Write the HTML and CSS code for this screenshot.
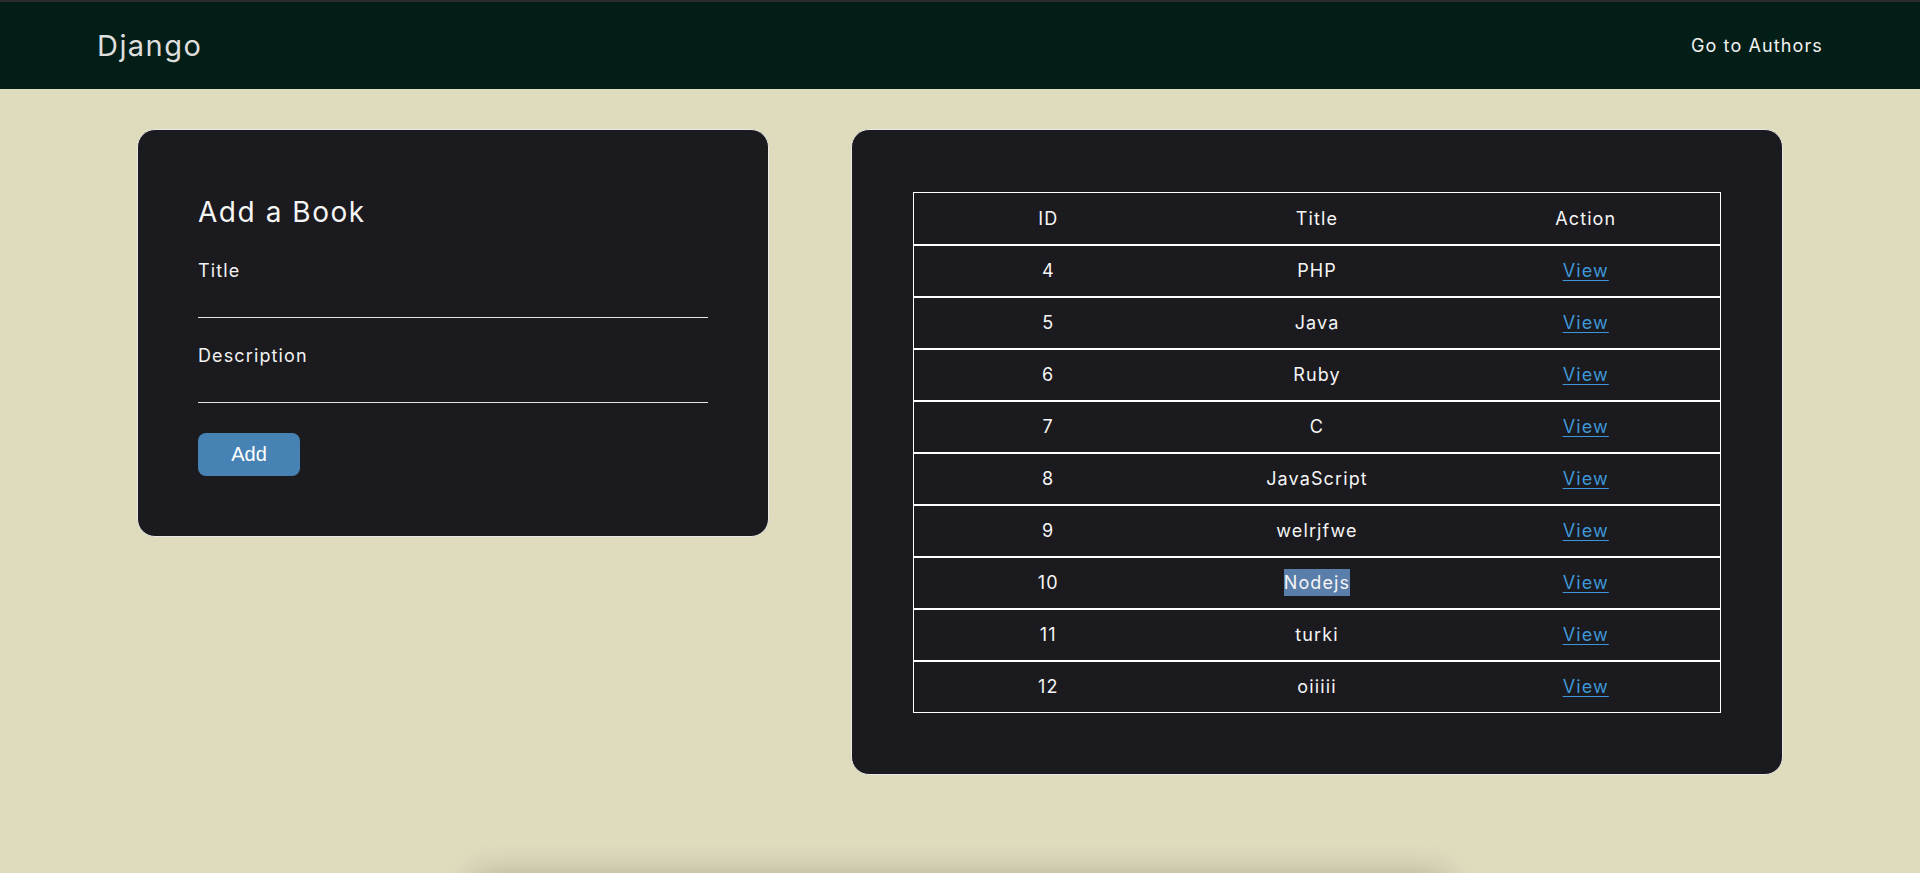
FILE: index.html
```html
<!DOCTYPE html>
<html lang="en">
<head>
<meta charset="utf-8">
<title>Django Books</title>
<link rel="stylesheet" href="styles.css">
</head>
<body>
<header class="topbar">
  <a class="brand" href="#">Django</a>
  <a class="nav-link" href="#">Go to Authors</a>
</header>
<main class="layout">
  <section class="card form-card">
    <h2 class="card-title">Add a Book</h2>
    <form class="book-form">
      <label class="field-label" for="title">Title</label>
      <input class="field-input" id="title" type="text">
      <label class="field-label field-label-gap" for="desc">Description</label>
      <input class="field-input" id="desc" type="text">
      <button class="btn-add" type="button">Add</button>
    </form>
  </section>
  <section class="card table-card">
    <table class="book-table">
      <thead>
        <tr><th>ID</th><th>Title</th><th>Action</th></tr>
      </thead>
      <tbody>
        <tr><td>4</td><td>PHP</td><td><a href="#">View</a></td></tr>
        <tr><td>5</td><td>Java</td><td><a href="#">View</a></td></tr>
        <tr><td>6</td><td>Ruby</td><td><a href="#">View</a></td></tr>
        <tr><td>7</td><td>C</td><td><a href="#">View</a></td></tr>
        <tr><td>8</td><td>JavaScript</td><td><a href="#">View</a></td></tr>
        <tr><td>9</td><td>welrjfwe</td><td><a href="#">View</a></td></tr>
        <tr><td>10</td><td><span class="selected">Nodejs</span></td><td><a href="#">View</a></td></tr>
        <tr><td>11</td><td>turki</td><td><a href="#">View</a></td></tr>
        <tr><td>12</td><td>oiiiii</td><td><a href="#">View</a></td></tr>
      </tbody>
    </table>
  </section>
</main>
<footer class="footer-panel"></footer>
</body>
</html>
```

FILE: styles.css
```css
* { box-sizing: border-box; }

html, body {
  margin: 0;
  padding: 0;
}

body {
  background: #dfdbbd;
  font-family: "Inter", "Noto Sans", sans-serif;
  color: #ffffff;
  letter-spacing: 0.07em;
}

.topbar {
  height: 89px;
  border-top: 2px solid #2c2c2c;
  background: #031e17;
  display: flex;
  align-items: center;
  justify-content: space-between;
  padding: 0 97px;
}

.brand {
  color: #dedede;
  text-decoration: none;
  font-size: 29px;
  font-weight: 400;
  letter-spacing: 0.05em;
}

.nav-link {
  color: #f2f2f2;
  text-decoration: none;
  font-size: 18px;
}

.layout {
  display: flex;
  align-items: flex-start;
  gap: 82px;
  padding: 40px 137px 0;
}

.card {
  background: #1b1a1f;
  border: 1px solid #e9e9e9;
  border-radius: 18px;
}

.form-card {
  width: 632px;
  padding: 60px;
}

.table-card {
  width: 932px;
  padding: 62px 61px 61px;
}

.card-title {
  margin: 0;
  font-size: 28px;
  line-height: 44px;
  font-weight: 400;
  color: #f5f5f5;
  letter-spacing: 0.055em;
}

.book-form {
  display: flex;
  flex-direction: column;
  align-items: flex-start;
  margin-top: 23px;
}

.field-label {
  font-size: 18px;
  line-height: 27px;
  color: #f2f2f2;
}

.field-label-gap {
  margin-top: 24px;
}

.field-input {
  width: 100%;
  height: 34px;
  background: transparent;
  border: none;
  border-bottom: 1px solid #e6e6e6;
  outline: none;
  color: #fff;
  font-size: 17px;
  font-family: inherit;
  padding: 0;
}

.btn-add {
  margin-top: 30px;
  width: 102px;
  height: 43px;
  background: #4682b4;
  color: #ffffff;
  border: none;
  border-radius: 8px;
  font-family: "Liberation Sans", Arial, sans-serif;
  font-size: 20px;
  letter-spacing: 0;
}

.book-table {
  width: 100%;
  border-collapse: collapse;
  border: 1px solid #ffffff;
  table-layout: fixed;
}

.book-table th,
.book-table td {
  height: 52px;
  padding: 0;
  text-align: center;
  font-size: 18px;
  font-weight: 400;
  color: #f5f5f5;
}

.book-table tbody td {
  border-top: 2px solid #ffffff;
}

.book-table a {
  color: #3d97d6;
  text-decoration: underline;
  text-underline-offset: 3px;
}

.selected {
  background: #5a7eaa;
  padding: 3px 0;
}

.footer-panel {
  width: 960px;
  height: 120px;
  margin: 106px auto 0;
  background: #dfdbbd;
  box-shadow: 0 0 30px 6px rgba(0, 0, 0, 0.22);
}
```
